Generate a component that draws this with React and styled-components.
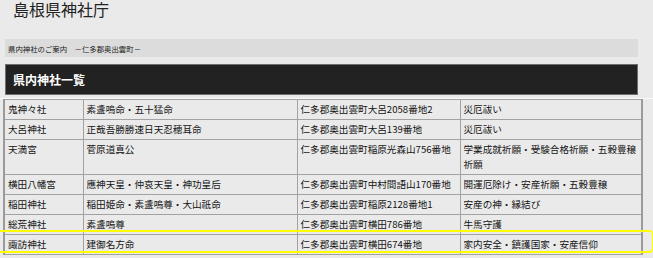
import React from "react";
import styled, { createGlobalStyle } from "styled-components";

const Global = createGlobalStyle`
  html, body { margin: 0; padding: 0; background: #eaeaea; }
  body { font-family: "Noto Sans CJK JP", "Noto Sans", sans-serif; color: #222; }
`;

const Page = styled.div`
  width: 653px;
  height: 258px;
  overflow: hidden;
  display: flex;
  flex-direction: column;
`;

const Title = styled.h1`
  margin: 0 0 0 13px;
  padding-top: 1px;
  height: 38px;
  font-size: 16px;
  line-height: 17px;
  font-weight: 400;
  color: #222;
`;

const Crumb = styled.div`
  margin: 0 15px 0 5px;
  height: 18px;
  background: #dcdcdc;
  display: flex;
  align-items: center;
  padding-left: 3px;
  font-size: 7.4px;
  color: #222;
  white-space: pre;
`;

const Heading = styled.h2`
  margin: 7px 15px 0 5px;
  height: 29px;
  background: #222;
  border: 1px solid #6e6e6e;
  display: flex;
  align-items: center;
  padding-left: 7px;
  font-size: 12px;
  font-weight: 700;
  color: #fff;
`;

const Rule = styled.div`
  margin-top: 3px;
  height: 1px;
  background: #fafafa;
`;

const TableWrap = styled.div`
  position: relative;
  margin-left: 3px;
  width: 638px;
`;

const Table = styled.table`
  width: 638px;
  border-collapse: collapse;
  table-layout: fixed;
  border-left: 2px solid #9a9a9a;
  border-right: 2px solid #9a9a9a;
  font-size: 9.6px;
  line-height: 15px;
`;

const Cell = styled.td`
  border: 1px solid #a2a2a2;
  padding: 2px 3px 2px 3px;
  vertical-align: top;
  color: #141414;
  word-break: break-all;
`;

const Highlight = styled.div`
  position: absolute;
  left: -12px;
  right: -13px;
  top: ${(p) => p.$top}px;
  height: 19px;
  border: 2px solid #ffff00;
  border-radius: 5px;
  pointer-events: none;
`;

const rows = [
  ["鬼神々社", "素盞嗚命・五十猛命", "仁多郡奥出雲町大呂2058番地2", "災厄祓い"],
  ["大呂神社", "正哉吾勝勝速日天忍穂耳命", "仁多郡奥出雲町大呂139番地", "災厄祓い"],
  ["天満宮", "菅原道真公", "仁多郡奥出雲町稲原光森山756番地", "学業成就祈願・受験合格祈願・五穀豊穣祈願"],
  ["横田八幡宮", "應神天皇・仲哀天皇・神功皇后", "仁多郡奥出雲町中村間語山170番地", "開運厄除け・安産祈願・五穀豊穣"],
  ["稲田神社", "稲田姫命・素盞嗚尊・大山祇命", "仁多郡奥出雲町稲原2128番地1", "安産の神・縁結び"],
  ["総荒神社", "素盞嗚尊", "仁多郡奥出雲町横田786番地", "牛馬守護"],
  ["諏訪神社", "建御名方命", "仁多郡奥出雲町横田674番地", "家内安全・鎮護国家・安産信仰"],
];

export default function App() {
  return (
    <Page>
      <Global />
      <Title>島根県神社庁</Title>
      <Crumb>{"県内神社のご案内　－仁多郡奥出雲町－"}</Crumb>
      <Heading>県内神社一覧</Heading>
      <Rule />
      <TableWrap>
        <Table>
          <colgroup>
            <col style={{ width: 79 }} />
            <col style={{ width: 214 }} />
            <col style={{ width: 163 }} />
            <col style={{ width: 182 }} />
          </colgroup>
          <tbody>
            {rows.map((r, i) => (
              <tr key={i}>
                {r.map((c, j) => (
                  <Cell key={j}>{c}</Cell>
                ))}
              </tr>
            ))}
          </tbody>
        </Table>
        <Highlight $top={131} />
      </TableWrap>
    </Page>
  );
}
